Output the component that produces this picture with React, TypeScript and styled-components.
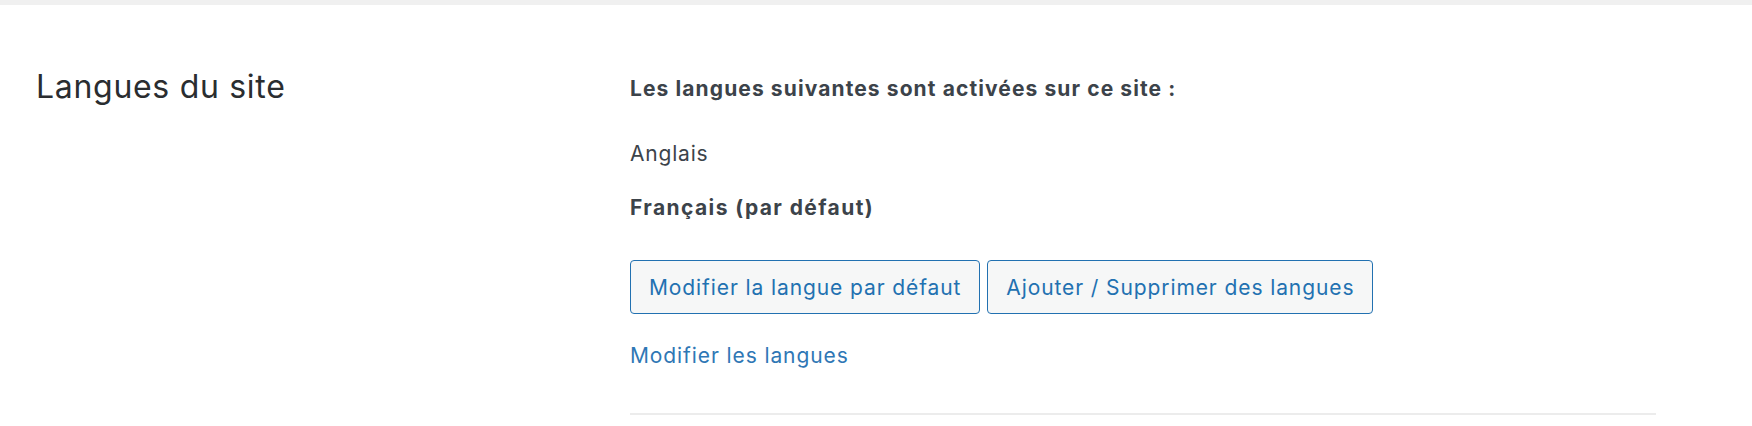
import React from "react";
import styled, { createGlobalStyle } from "styled-components";

const Global = createGlobalStyle`
  html, body { margin: 0; padding: 0; background: #ffffff; }
  body { font-family: Inter, "Noto Sans", "Liberation Sans", sans-serif; -webkit-font-smoothing: antialiased; }
  * { box-sizing: border-box; }
`;

const Page = styled.div`
  width: 1752px;
  height: 426px;
  border-top: 5px solid #f0f0f0;
  background: #fff;
`;

const Row = styled.section`
  display: grid;
  grid-template-columns: 594px 1026px;
  padding-left: 36px;
`;

const Label = styled.h2`
  margin: 0;
  padding-top: 62px;
  font-size: 32px;
  line-height: 40px;
  font-weight: 400;
  letter-spacing: 0.7px;
  color: #2a2d30;
`;

const Content = styled.div`
  display: flex;
  flex-direction: column;
  align-items: flex-start;
  padding-top: 70px;
  font-size: 21px;
  letter-spacing: 0.9px;
`;

const Intro = styled.p`
  margin: 0;
  line-height: 28px;
  font-weight: 700;
  letter-spacing: 1.1px;
  color: #3c434a;
`;

const LangList = styled.ul`
  list-style: none;
  margin: 37px 0 0;
  padding: 0;
  display: flex;
  flex-direction: column;
  gap: 26px;
`;

const LangItem = styled.li<{ $default?: boolean }>`
  line-height: 28px;
  font-weight: ${(p) => (p.$default ? 700 : 400)};
  letter-spacing: ${(p) => (p.$default ? "1.4px" : "0.8px")};
  color: #3c434a;
`;

const Actions = styled.div`
  display: flex;
  gap: 7px;
  margin-top: 38px;
`;

const Button = styled.button`
  height: 54px;
  padding: 0 18px;
  border: 1px solid #2271b1;
  border-radius: 4px;
  background: #f6f7f7;
  color: #2271b1;
  font-family: inherit;
  font-size: 21px;
  letter-spacing: 0.9px;
  font-weight: 400;
  cursor: pointer;
`;

const Link = styled.a`
  margin-top: 28px;
  line-height: 28px;
  color: #2f77b5;
  text-decoration: none;
`;

const Divider = styled.hr`
  align-self: stretch;
  margin: 43px 0 0;
  border: 0;
  border-top: 2px solid #ececec;
`;

export default function App() {
  return (
    <Page>
      <Global />
      <Row>
        <Label>Langues du site</Label>
        <Content>
          <Intro>Les langues suivantes sont activées sur ce site :</Intro>
          <LangList>
            <LangItem>Anglais</LangItem>
            <LangItem $default>Français (par défaut)</LangItem>
          </LangList>
          <Actions>
            <Button>Modifier la langue par défaut</Button>
            <Button>Ajouter / Supprimer des langues</Button>
          </Actions>
          <Link href="#">Modifier les langues</Link>
          <Divider />
        </Content>
      </Row>
    </Page>
  );
}
